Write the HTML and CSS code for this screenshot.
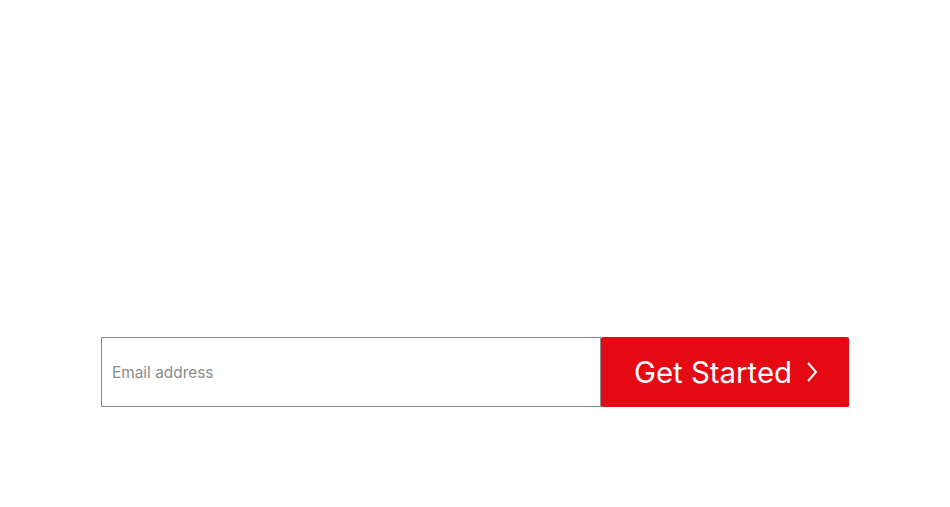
FILE: index.html
```html
<!DOCTYPE html>
<html lang="en">
<head>
<meta charset="utf-8">
<title>Get Started</title>
<link rel="stylesheet" href="styles.css">
</head>
<body>
<main class="hero">
  <form class="signup">
    <input class="email" type="email" placeholder="Email address">
    <button class="cta" type="button">
      <span class="cta-label">Get Started</span>
      <svg class="chev" width="12" height="22" viewBox="0 0 12 22" aria-hidden="true">
        <path d="M2 2 L10 11 L2 20" fill="none" stroke="#fff" stroke-width="2"/>
      </svg>
    </button>
  </form>
</main>
</body>
</html>
```

FILE: styles.css
```css
html, body {
  margin: 0;
  padding: 0;
  background: #fff;
}
body {
  font-family: Inter, "Noto Sans", Roboto, sans-serif;
}
.hero {
  display: flex;
  justify-content: center;
  padding-top: 337px;
}
.signup {
  display: flex;
  width: 748px;
  height: 70px;
}
.email {
  box-sizing: border-box;
  width: 500px;
  height: 70px;
  margin: 0;
  border: 1px solid #8c8c8c;
  padding: 1px 10px 0;
  font-family: Inter, "Noto Sans", Roboto, sans-serif;
  font-size: 15.4px;
  color: #333;
  outline: none;
  border-radius: 0;
}
.email::placeholder {
  color: #8c8c8c;
}
.cta {
  box-sizing: border-box;
  flex: 1;
  height: 70px;
  margin: 0;
  border: none;
  border-radius: 2px;
  background: #e50914;
  color: #fff;
  display: flex;
  align-items: center;
  justify-content: center;
  gap: 14px;
  padding: 0 0 0 2px;
  font-family: Inter, "Noto Sans", Roboto, sans-serif;
  font-size: 29.4px;
  font-weight: 400;
  box-shadow: 0 1px 0 rgba(0,0,0,0.45);
  cursor: pointer;
}
.chev {
  display: block;
}
```
